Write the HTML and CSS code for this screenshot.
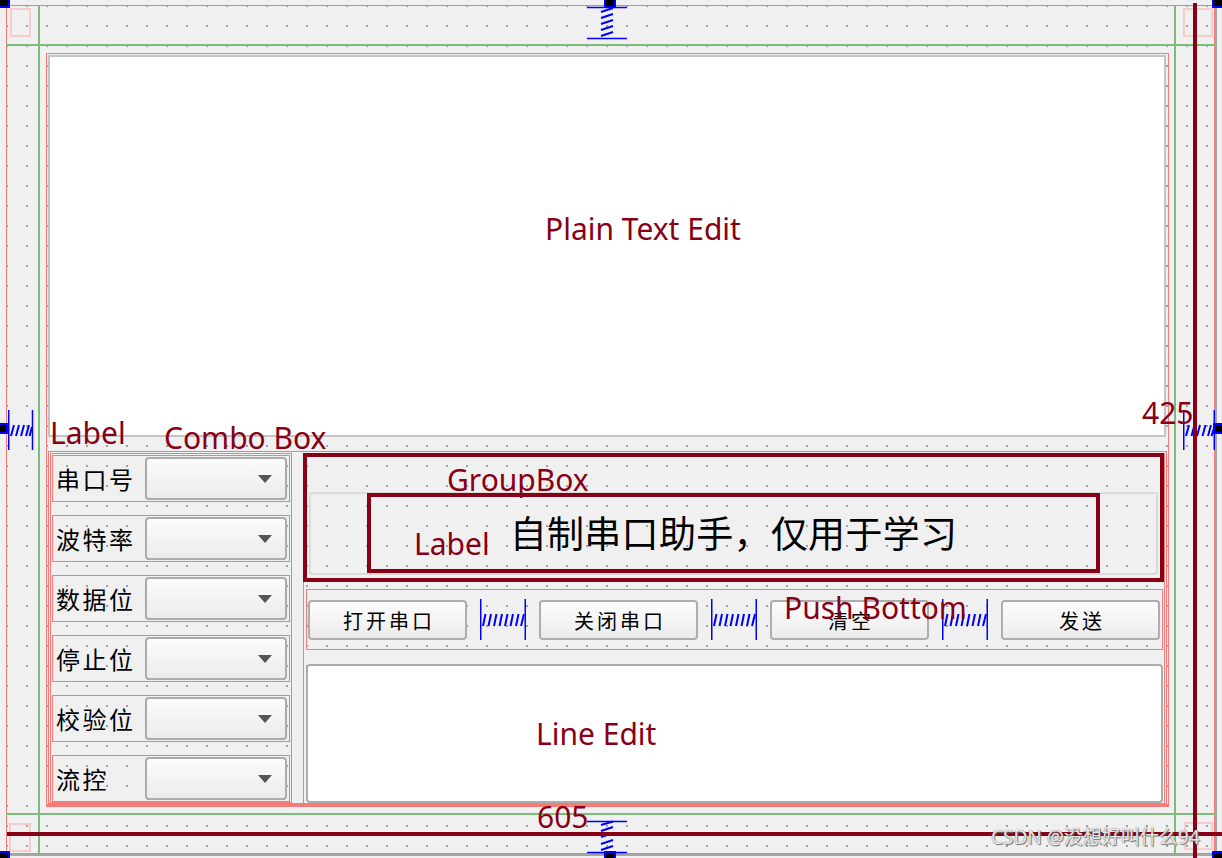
FILE: index.html
```html
<!DOCTYPE html>
<html lang="zh-CN">
<head>
<meta charset="utf-8">
<title>串口助手 - Designer</title>
<link rel="stylesheet" href="styles.css">
</head>
<body>
<div class="window">
  <svg class="sp-top" width="40" height="34" viewBox="0 0 40 34">
    <path d="M0 1.5H40M0 32.5H40" stroke="#00f" stroke-width="1.5"/>
    <path d="M14 6L26 2M14 12L26 8M14 18L26 14M14 24L26 20M14 30L26 26" stroke="#00f" stroke-width="2.2" fill="none"/>
  </svg>
  <svg class="sp-left" width="26" height="40" viewBox="0 0 26 40">
    <path d="M0.75 0V40M24.5 0V40" stroke="#00f" stroke-width="1.5"/>
    <path d="M3 26L6 15M8 26L11 15M13 26L16 15M18 26L21 15M21.5 26L24 17" stroke="#00f" stroke-width="2" fill="none"/>
  </svg>
  <div class="central">
    <div class="vlayout">
      <div class="plain"></div>
      <div class="hbottom">
        <div class="params">
          <div class="row"><span class="lbl">串口号</span><div class="combo"><i class="arrow"></i></div></div>
          <div class="row"><span class="lbl">波特率</span><div class="combo"><i class="arrow"></i></div></div>
          <div class="row"><span class="lbl">数据位</span><div class="combo"><i class="arrow"></i></div></div>
          <div class="row"><span class="lbl">停止位</span><div class="combo"><i class="arrow"></i></div></div>
          <div class="row"><span class="lbl">校验位</span><div class="combo"><i class="arrow"></i></div></div>
          <div class="row"><span class="lbl">流控</span><div class="combo"><i class="arrow"></i></div></div>
        </div>
        <div class="rightcol">
          <div class="groupbox">
            <div class="gframe"><span class="title">自制串口助手，仅用于学习</span></div>
          </div>
          <div class="btnrow">
            <div class="btn">打开串口</div>
            <svg class="hsp" width="46" height="41" viewBox="0 0 46 41">
              <path d="M0.75 0V41M45.25 0V41" stroke="#00f" stroke-width="1.5"/>
              <path d="M3 27L5.5 15M8.5 27L11 15M14 27L16.5 15M19.5 27L22 15M25 27L27.5 15M30.5 27L33 15M36 27L38.5 15M41 27L44 15" stroke="#00f" stroke-width="2" fill="none"/>
            </svg>
            <div class="btn">关闭串口</div>
            <svg class="hsp" width="46" height="41" viewBox="0 0 46 41">
              <path d="M0.75 0V41M45.25 0V41" stroke="#00f" stroke-width="1.5"/>
              <path d="M3 27L5.5 15M8.5 27L11 15M14 27L16.5 15M19.5 27L22 15M25 27L27.5 15M30.5 27L33 15M36 27L38.5 15M41 27L44 15" stroke="#00f" stroke-width="2" fill="none"/>
            </svg>
            <div class="btn">清空</div>
            <svg class="hsp" width="46" height="41" viewBox="0 0 46 41">
              <path d="M0.75 0V41M45.25 0V41" stroke="#00f" stroke-width="1.5"/>
              <path d="M3 27L5.5 15M8.5 27L11 15M14 27L16.5 15M19.5 27L22 15M25 27L27.5 15M30.5 27L33 15M36 27L38.5 15M41 27L44 15" stroke="#00f" stroke-width="2" fill="none"/>
            </svg>
            <div class="btn">发送</div>
          </div>
          <div class="lineedit"></div>
        </div>
      </div>
    </div>
  </div>
  <svg class="sp-right" width="32" height="40" viewBox="0 0 32 40">
    <path d="M0.75 0V40M31.25 0V40" stroke="#00f" stroke-width="1.5"/>
    <path d="M3 26L6 15M8.5 26L11.5 15M14 26L17 15M19.5 26L22.5 15M25 26L28 15M28.5 26L31 18" stroke="#00f" stroke-width="2" fill="none"/>
  </svg>
  <svg class="sp-bottom" width="40" height="34" viewBox="0 0 40 34">
    <path d="M0 1.5H40M0 32.5H40" stroke="#00f" stroke-width="1.5"/>
    <path d="M14 5L26 1.5M14 11L26 7M14 17L26 13M14 24L26 20M14 30L26 26" stroke="#00f" stroke-width="2.2" fill="none"/>
  </svg>
</div>

<div class="gl gl-h" style="top:44px"></div>
<div class="gl gl-h" style="top:813px"></div>
<div class="gl gl-v" style="left:38px"></div>
<div class="gl gl-v" style="left:1174px"></div>

<div class="pk pk-tl"></div>
<div class="pk pk-tr"></div>
<div class="pk pk-bl"></div>
<div class="pk pk-br"></div>

<div class="note n-plain">Plain Text Edit</div>
<div class="note n-label1">Label</div>
<div class="note n-combo">Combo Box</div>
<div class="note n-group">GroupBox</div>
<div class="note n-label2">Label</div>
<div class="note n-push">Push Bottom</div>
<div class="note n-line">Line Edit</div>
<div class="note n-605">605</div>
<div class="note n-425">425</div>

<div class="mark rect-group"></div>
<div class="mark rect-label"></div>
<div class="mark line-v"></div>
<div class="mark line-h"></div>

<div class="hd hd-tl"></div>
<div class="hd hd-tm"></div>
<div class="hd hd-tr"></div>
<div class="hd hd-ml"></div>
<div class="hd hd-mr"></div>
<div class="hd hd-bl"></div>
<div class="hd hd-bm"></div>
<div class="hd hd-br"></div>

<div class="watermark">CSDN @没想好叫什么94</div>
</body>
</html>
```

FILE: styles.css
```css
html {
  background-color: #f0f0f0;
  background-image: conic-gradient(at 2px 2px, transparent 75%, #a0a0a0 0);
  background-size: 20px 20px;
  background-position: 6px 5px;
}

body {
  margin: 0;
  padding: 5px 0 0 6px;
  width: 1222px;
  height: 858px;
  box-sizing: border-box;
  position: relative;
  overflow: hidden;
  font-family: "Noto Sans CJK SC", "Noto Sans", sans-serif;
  color: #000;
}

svg { display: block; }

/* ---------- form window ---------- */
.window {
  width: 1209px;
  height: 849px;
  box-sizing: border-box;
  border: 1px solid #f57a7a;
  box-shadow: 2px 2px 0 #a6a6a6;
  display: grid;
  grid-template-columns: 32px 1136px 39px;
  grid-template-rows: 39px 768px 40px;
}

.sp-top { grid-column: 2; grid-row: 1; justify-self: center; align-self: start; }
.sp-left { grid-column: 1; grid-row: 2; align-self: center; justify-self: start; margin-left: 1px; margin-top: 2px; }
.sp-right { grid-column: 3; grid-row: 2; align-self: center; justify-self: start; margin-left: 8px; margin-top: 2px; }
.sp-bottom { grid-column: 2; grid-row: 3; justify-self: center; align-self: start; margin-top: 7px; }

.central {
  grid-column: 2;
  grid-row: 2;
  padding: 8px 6px 6px 7px;
  box-sizing: border-box;
  display: flex;
  min-height: 0;
}

.vlayout {
  flex: 1;
  display: flex;
  flex-direction: column;
  border: 1px solid #f57a7a;
  border-bottom-width: 3px;
  padding: 1px 1px 0 1px;
  min-height: 0;
}

.plain {
  height: 382px;
  flex: none;
  box-sizing: border-box;
  margin-right: 1px;
  border: 2px solid #c3c3c3;
  border-radius: 1px;
  background: #fff;
}

.hbottom {
  margin-top: 14px;
  flex: 1;
  display: flex;
  gap: 11px;
  border: 1px solid #f57a7a;
  padding: 1px 1px 0 1px;
  min-height: 0;
}

/* ---------- left parameter column ---------- */
.params {
  width: 242px;
  box-sizing: border-box;
  border: 1px solid #f57a7a;
  padding: 1px;
  display: flex;
  flex-direction: column;
  gap: 13px;
}

.row {
  display: flex;
  align-items: center;
  border: 1px solid #f57a7a;
  padding: 1px 2px 1px 3px;
}

.lbl {
  flex: 1;
  font-size: 24px;
  letter-spacing: 2.5px;
  line-height: 43px;
  white-space: nowrap;
}

.combo {
  width: 142px;
  height: 43px;
  box-sizing: border-box;
  border: 2px solid #ababab;
  border-radius: 4px;
  background: linear-gradient(to bottom, #fcfcfc, #ebebeb);
  display: flex;
  align-items: center;
  justify-content: flex-end;
  padding-right: 13px;
}

.arrow {
  width: 0;
  height: 0;
  border-left: 7.5px solid transparent;
  border-right: 7.5px solid transparent;
  border-top: 8px solid #555;
}

/* ---------- right column ---------- */
.rightcol {
  flex: 1;
  display: flex;
  flex-direction: column;
  border: 1px solid #f57a7a;
  border-bottom: 0;
  min-width: 0;
}

.groupbox {
  padding: 38px 6px 4px 5px;
}

.gframe {
  height: 83px;
  box-sizing: border-box;
  border: 2px solid #dadada;
  border-radius: 3px;
  display: flex;
  align-items: center;
  justify-content: center;
}

.title {
  font-size: 37px;
  letter-spacing: 0.3px;
  line-height: 1;
  white-space: nowrap;
  margin-top: -2px;
}

.btnrow {
  margin: 10px 1px 0 2px;
  border: 1px solid #f57a7a;
  padding: 10px 1px 9px 1px;
  display: flex;
  align-items: center;
  gap: 13px;
}

.btn {
  width: 159px;
  height: 40px;
  flex: none;
  box-sizing: border-box;
  border: 2px solid #adadad;
  border-radius: 4px;
  background: linear-gradient(to bottom, #fdfdfd, #ececec);
  font-size: 20px;
  letter-spacing: 3px;
  padding-left: 3px;
  display: flex;
  align-items: center;
  justify-content: center;
  white-space: nowrap;
}

.hsp { flex: none; margin-top: -1px; }

.lineedit {
  flex: 1;
  margin: 14px 1px 0 2px;
  border: 2px solid #acacac;
  border-radius: 4px;
  background: #fff;
}

/* ---------- designer overlays ---------- */
.gl {
  position: absolute;
  background: #7cbc7c;
}
.gl-h { left: 6px; width: 1211px; height: 2px; }
.gl-v { top: 5px; width: 2px; height: 851px; }

.pk {
  position: absolute;
  box-sizing: border-box;
  border: 2px solid #f6cdcd;
}
.pk-tl { left: 10px; top: 8px; width: 21px; height: 29px; }
.pk-tr { left: 1183px; top: 8px; width: 30px; height: 29px; }
.pk-bl { left: 9px; top: 823px; width: 22px; height: 29px; }
.pk-br { left: 1184px; top: 822px; width: 29px; height: 28px; }

.hd {
  position: absolute;
  box-sizing: border-box;
  background: #000;
  border: 2px solid #0000ff;
}
.hd-tl { left: -2px; top: -2px; width: 12px; height: 10px; }
.hd-tm { left: 604px; top: -2px; width: 12px; height: 10px; }
.hd-tr { left: 1212px; top: -2px; width: 12px; height: 10px; }
.hd-ml { left: -2px; top: 423px; width: 10px; height: 11px; }
.hd-mr { left: 1213px; top: 423px; width: 12px; height: 11px; }
.hd-bl { left: -2px; top: 851px; width: 12px; height: 10px; }
.hd-bm { left: 604px; top: 851px; width: 12px; height: 10px; }
.hd-br { left: 1212px; top: 851px; width: 12px; height: 10px; }

/* ---------- annotations ---------- */
.note {
  position: absolute;
  font-family: "Noto Sans", "Open Sans", sans-serif;
  font-size: 30px;
  line-height: 30px;
  color: #880015;
  white-space: nowrap;
}
.n-plain { left: 545px; top: 214px; }
.n-label1 { left: 50px; top: 418px; }
.n-combo { left: 164px; top: 423px; }
.n-group { left: 447px; top: 465px; }
.n-label2 { left: 414px; top: 529px; }
.n-push { left: 784px; top: 593px; }
.n-line { left: 536px; top: 719px; }
.n-605 { left: 537px; top: 802px; }
.n-425 { left: 1142px; top: 398px; }

.mark {
  position: absolute;
  box-sizing: border-box;
}
.rect-group { left: 303px; top: 453px; width: 861px; height: 129px; border: 4px solid #880015; }
.rect-label { left: 367px; top: 493px; width: 733px; height: 80px; border: 4px solid #880015; }
.line-v { left: 1193px; top: 3px; width: 4px; height: 856px; background: #880015; }
.line-h { left: 7px; top: 832px; width: 1215px; height: 4px; background: #880015; }

.watermark {
  position: absolute;
  left: 991px;
  top: 825px;
  font-family: "Noto Sans", "Noto Sans CJK SC", sans-serif;
  font-size: 19px;
  line-height: 24px;
  color: rgba(250, 250, 250, 0.9);
  text-shadow: 0 0 1px #555, 1px 1px 1px #777;
  white-space: nowrap;
}
```
